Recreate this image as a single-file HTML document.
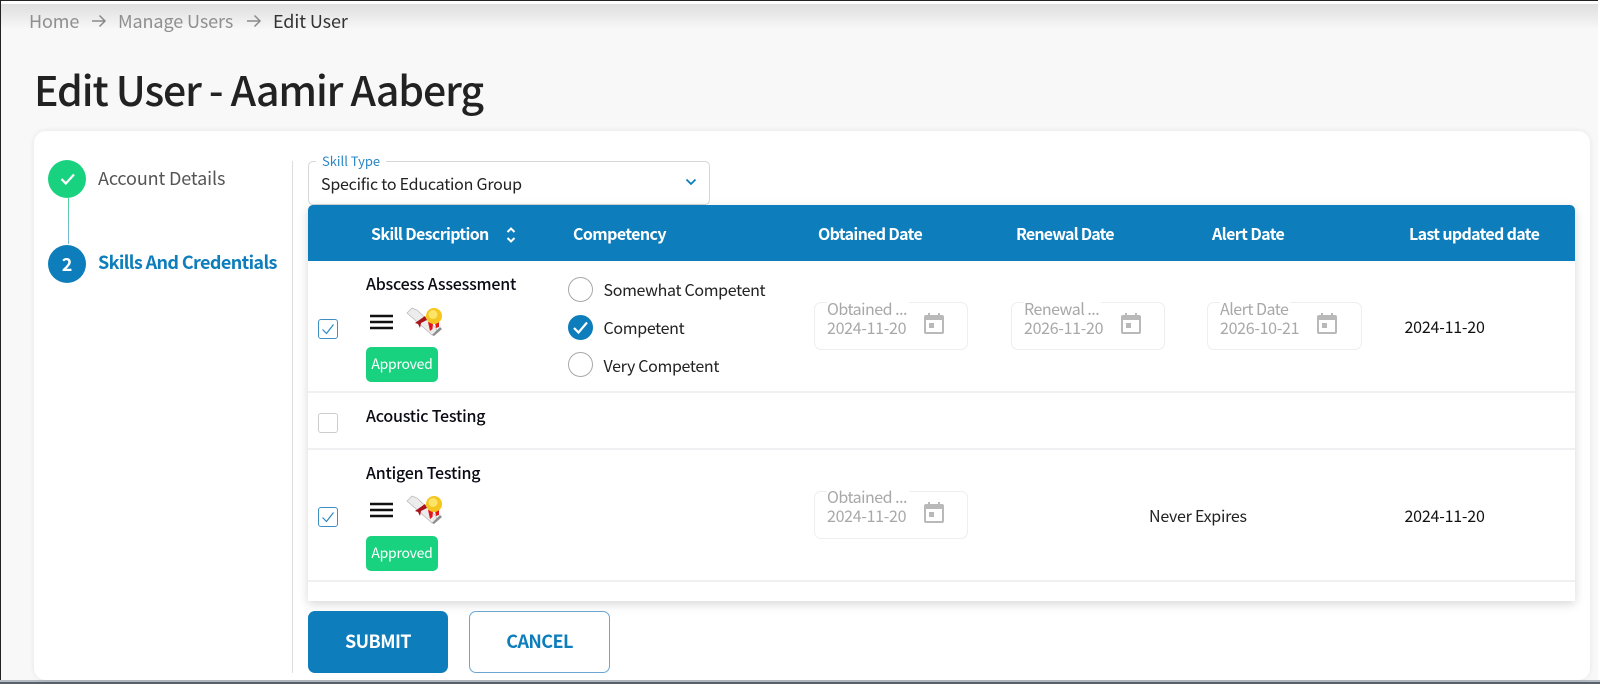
<!DOCTYPE html>
<html><head><meta charset="utf-8"><style>
html,body{margin:0;padding:0;width:1600px;height:684px;overflow:hidden;background:#f8f8f8}
body{position:relative;font-family:"Noto Sans CJK JP","Liberation Sans",sans-serif;color:#212121}
.a{position:absolute;white-space:nowrap;line-height:1}
.t{position:absolute;white-space:nowrap;line-height:24px;height:24px}
.th{color:#fff;font-size:16px;font-weight:700;top:221px;letter-spacing:-.6px}
.nm{color:#0b0b16;font-size:16px;font-weight:500;left:366px;letter-spacing:-.22px}
.rd{position:absolute;left:568px;width:25px;height:25px;box-sizing:border-box;border:1px solid #a9a9a9;border-radius:50%;background:#fff}
.rl{font-size:16px;color:#222;left:603.500px;letter-spacing:-.33px}
.fld{position:absolute;width:154px;height:48px;box-sizing:border-box;border:1px solid #eee;border-radius:7px;background:#fff}
.lb{font-size:16px;color:#a8a8a8;letter-spacing:-.3px}
.lt{letter-spacing:-.5px;height:17px;padding-right:2px;background:#fff}
.ap{position:absolute;left:366px;width:72px;height:35px;background:#19d27f;border-radius:5px;color:#fff;font-size:14px;line-height:35px;text-align:center;letter-spacing:-.25px}
.cb{position:absolute;left:318px;width:20px;height:20px;box-sizing:border-box;border:1px solid #3d8fc4;border-radius:3px;background:#fff}
.sep{position:absolute;left:308px;width:1267px;height:2px;background:#f0f0f2}
svg{position:absolute;overflow:visible}
</style></head><body>
<div class="a" style="left:0;top:0;width:1600px;height:1px;background:#222"></div>
<div class="a" style="left:0;top:1px;width:1600px;height:3px;background:#fff"></div>
<div class="a" style="left:0;top:4px;width:1600px;height:26px;background:linear-gradient(#dfdfdf,#f8f8f8)"></div>
<div class="a" style="left:0;top:0;width:1px;height:684px;background:#222"></div>
<div class="a" style="left:1598px;top:0;width:2px;height:684px;background:#fff"></div>
<div class="a" style="left:0;top:680px;width:1600px;height:2px;background:#b4bac2"></div>
<div class="a" style="left:0;top:682px;width:1600px;height:2px;background:#59616b"></div>

<div class="t" style="left:29px;top:9px;font-size:18px;color:#8f8f8f;letter-spacing:-.1px">Home</div>
<svg style="left:91px;top:14px" width="16" height="14" viewBox="0 0 16 14"><path d="M1 7H14M8.500 1.500L14 7L8.500 12.500" fill="none" stroke="#8a8a8a" stroke-width="1.500"/></svg>
<div class="t" style="left:118px;top:9px;font-size:18px;color:#8f8f8f;letter-spacing:-.1px">Manage Users</div>
<svg style="left:245.500px;top:14px" width="16" height="14" viewBox="0 0 16 14"><path d="M1 7H14M8.500 1.500L14 7L8.500 12.500" fill="none" stroke="#8a8a8a" stroke-width="1.500"/></svg>
<div class="t" style="left:273px;top:8.500px;font-size:18px;color:#333;letter-spacing:-.1px">Edit User</div>
<div class="t" style="left:34px;top:63.500px;font-size:41px;font-weight:500;line-height:48px;height:48px;color:#222;letter-spacing:-1.100px">Edit User - Aamir Aaberg</div>

<div class="a" style="left:34px;top:131px;width:1556px;height:549px;background:#fff;border-radius:12px;box-shadow:0 0 6px rgba(0,0,0,.08)"></div>

<div class="a" style="left:48px;top:160px;width:38px;height:38px;border-radius:50%;background:#19d27f"></div>
<svg style="left:60px;top:172px" width="16" height="14" viewBox="0 0 16 14"><path d="M1.500 7L5.800 11.500L14 2.500" fill="none" stroke="#fff" stroke-width="2.200"/></svg>
<div class="a" style="left:67.500px;top:198px;width:1px;height:46px;background:linear-gradient(#4fd69a,#7fb4dc)"></div>
<div class="a" style="left:48px;top:245px;width:38px;height:38px;border-radius:50%;background:#0d7dbb;color:#fff;font-size:18px;font-weight:700;line-height:38px;text-align:center">2</div>
<div class="t" style="left:98px;top:166px;font-size:18px;color:#555;letter-spacing:-.13px">Account Details</div>
<div class="t" style="left:98px;top:250px;font-size:18px;font-weight:700;color:#0d7dbb;letter-spacing:-.62px">Skills And Credentials</div>
<div class="a" style="left:292px;top:161px;width:1px;height:512px;background:#ddd"></div>

<div class="a" style="left:308px;top:161px;width:402px;height:44px;box-sizing:border-box;border:1px solid #d6d6d6;border-radius:5px;background:#fff"></div>
<div class="t" style="left:316px;top:149.500px;padding:0 6px;background:#fff;font-size:13px;line-height:22px;height:22px;color:#2a86c4">Skill Type</div>
<div class="t" style="left:321px;top:171px;font-size:16px;color:#222;letter-spacing:-.22px">Specific to Education Group</div>
<svg style="left:685px;top:178px" width="12" height="8" viewBox="0 0 12 8"><path d="M1.500 1.500L6 6L10.500 1.500" fill="none" stroke="#0d7dbb" stroke-width="1.800"/></svg>

<div class="a" style="left:308px;top:205px;width:1267px;height:396px;background:#fff;border-radius:5px 5px 0 0;box-shadow:0 3px 10px rgba(0,0,0,.16)"></div>
<div class="a" style="left:308px;top:205px;width:1267px;height:56px;background:#0d7dbb;border-radius:5px 5px 0 0"></div>
<div class="t th" style="left:371px;letter-spacing:-.66px">Skill Description</div>
<svg style="left:505px;top:226px" width="12" height="18" viewBox="0 0 12 18"><path d="M2.500 6L6 2.500L9.500 6M2.500 12L6 15.500L9.500 12" fill="none" stroke="#fff" stroke-width="2"/></svg>
<div class="t th" style="left:573px">Competency</div>
<div class="t th" style="left:818px;letter-spacing:-.66px">Obtained Date</div>
<div class="t th" style="left:1016px;letter-spacing:-.82px">Renewal Date</div>
<div class="t th" style="left:1212px">Alert Date</div>
<div class="t th" style="left:1409px;letter-spacing:-.66px">Last updated date</div>

<div class="sep" style="top:391px"></div>
<div class="sep" style="top:448px"></div>
<div class="sep" style="top:580px"></div>

<!-- row 1 -->
<div class="t nm" style="top:271px">Abscess Assessment</div>
<div class="cb" style="top:319px"></div>
<svg style="left:318px;top:319px" width="20" height="20" viewBox="0 0 20 20"><path d="M4.500 10.500L8.500 14.500L15.500 5.500" fill="none" stroke="#2a86c4" stroke-width="1.200"/></svg>
<svg style="left:370px;top:314px" width="23" height="16" viewBox="0 0 23 16"><path d="M0 2H23M0 8H23M0 14H23" stroke="#111" stroke-width="2.500"/></svg>
<svg style="left:406px;top:307px" width="37" height="29" viewBox="0 0 37 29"><path d="M1 6L6 1L11 3L30 21L31 25L26 28Z" fill="#ececec" stroke="#b5b5b5" stroke-width=".7"/><path d="M26 28L34 20L36 22L28 29Z" fill="#8d8d8d"/><path d="M9 16L19 9L21 13L15 16L14 21L12 17Z" fill="#a8151c"/><path d="M22 15L24 24L26.500 22L27 16ZM29 16L30 21L33 20L33 14Z" fill="#e3151a"/><circle cx="28" cy="9" r="8" fill="#f4c61f"/><circle cx="27" cy="7.500" r="4.500" fill="#fce468"/></svg>
<div class="ap" style="top:347px">Approved</div>

<div class="rd" style="top:277px"></div><div class="t rl" style="top:277px">Somewhat Competent</div>
<div class="rd" style="top:315px;background:#0d7dbb;border-color:#0d7dbb"></div>
<svg style="left:568px;top:315px" width="25" height="25" viewBox="0 0 25 25"><path d="M6 13L10.500 17.500L19 7.500" fill="none" stroke="#fff" stroke-width="2.200"/></svg>
<div class="t rl" style="top:315px">Competent</div>
<div class="rd" style="top:352px"></div><div class="t rl" style="top:353px">Very Competent</div>

<div class="fld" style="left:814px;top:302px"></div>
<div class="t lb lt" style="left:827px;top:296px">Obtained ...</div>
<div class="t lb" style="left:827px;top:315px">2024-11-20</div>
<svg style="left:924px;top:313px" width="20" height="21" viewBox="0 0 20 21"><path fill-rule="evenodd" d="M4 0H6V2H14V0H16V2H18Q20 2 20 4V19Q20 21 18 21H2Q0 21 0 19V4Q0 2 2 2H4ZM2 7V19H18V7ZM5 10H10V15H5Z" fill="#b9b9b9"/></svg>

<div class="fld" style="left:1011px;top:302px"></div>
<div class="t lb lt" style="left:1024px;top:296px">Renewal ...</div>
<div class="t lb" style="left:1024px;top:315px">2026-11-20</div>
<svg style="left:1121px;top:313px" width="20" height="21" viewBox="0 0 20 21"><path fill-rule="evenodd" d="M4 0H6V2H14V0H16V2H18Q20 2 20 4V19Q20 21 18 21H2Q0 21 0 19V4Q0 2 2 2H4ZM2 7V19H18V7ZM5 10H10V15H5Z" fill="#b9b9b9"/></svg>

<div class="fld" style="left:1207px;top:302px;width:155px"></div>
<div class="t lb lt" style="left:1220px;top:296px">Alert Date</div>
<div class="t lb" style="left:1220px;top:315px">2026-10-21</div>
<svg style="left:1317px;top:313px" width="20" height="21" viewBox="0 0 20 21"><path fill-rule="evenodd" d="M4 0H6V2H14V0H16V2H18Q20 2 20 4V19Q20 21 18 21H2Q0 21 0 19V4Q0 2 2 2H4ZM2 7V19H18V7ZM5 10H10V15H5Z" fill="#b9b9b9"/></svg>

<div class="t" style="left:1404.500px;top:314px;font-size:16px;color:#111;letter-spacing:-.2px">2024-11-20</div>

<!-- row 2 -->
<div class="t nm" style="top:402.500px">Acoustic Testing</div>
<div class="cb" style="top:413px;border-color:#ccc"></div>

<!-- row 3 -->
<div class="t nm" style="top:460px">Antigen Testing</div>
<div class="cb" style="top:507px"></div>
<svg style="left:318px;top:507px" width="20" height="20" viewBox="0 0 20 20"><path d="M4.500 10.500L8.500 14.500L15.500 5.500" fill="none" stroke="#2a86c4" stroke-width="1.200"/></svg>
<svg style="left:370px;top:502px" width="23" height="16" viewBox="0 0 23 16"><path d="M0 2H23M0 8H23M0 14H23" stroke="#111" stroke-width="2.500"/></svg>
<svg style="left:406px;top:495px" width="37" height="29" viewBox="0 0 37 29"><path d="M1 6L6 1L11 3L30 21L31 25L26 28Z" fill="#ececec" stroke="#b5b5b5" stroke-width=".7"/><path d="M26 28L34 20L36 22L28 29Z" fill="#8d8d8d"/><path d="M9 16L19 9L21 13L15 16L14 21L12 17Z" fill="#a8151c"/><path d="M22 15L24 24L26.500 22L27 16ZM29 16L30 21L33 20L33 14Z" fill="#e3151a"/><circle cx="28" cy="9" r="8" fill="#f4c61f"/><circle cx="27" cy="7.500" r="4.500" fill="#fce468"/></svg>
<div class="ap" style="top:536px">Approved</div>

<div class="fld" style="left:814px;top:491px"></div>
<div class="t lb lt" style="left:827px;top:484px">Obtained ...</div>
<div class="t lb" style="left:827px;top:503px">2024-11-20</div>
<svg style="left:924px;top:502px" width="20" height="21" viewBox="0 0 20 21"><path fill-rule="evenodd" d="M4 0H6V2H14V0H16V2H18Q20 2 20 4V19Q20 21 18 21H2Q0 21 0 19V4Q0 2 2 2H4ZM2 7V19H18V7ZM5 10H10V15H5Z" fill="#b9b9b9"/></svg>
<div class="t" style="left:1149px;top:503px;font-size:16px;color:#222;letter-spacing:-.25px">Never Expires</div>
<div class="t" style="left:1404.500px;top:503px;font-size:16px;color:#111;letter-spacing:-.2px">2024-11-20</div>

<div class="a" style="left:308px;top:611px;width:140px;height:62px;background:#0d7dbb;border-radius:7px;color:#fff;font-size:18px;font-weight:700;line-height:60px;text-align:center;letter-spacing:-.6px">SUBMIT</div>
<div class="a" style="left:469px;top:611px;width:141px;height:62px;box-sizing:border-box;border:1px solid #6ba6d2;border-radius:7px;background:#fff;color:#0d7dbb;font-size:18px;font-weight:700;line-height:58px;text-align:center;letter-spacing:-.6px">CANCEL</div>
</body></html>
